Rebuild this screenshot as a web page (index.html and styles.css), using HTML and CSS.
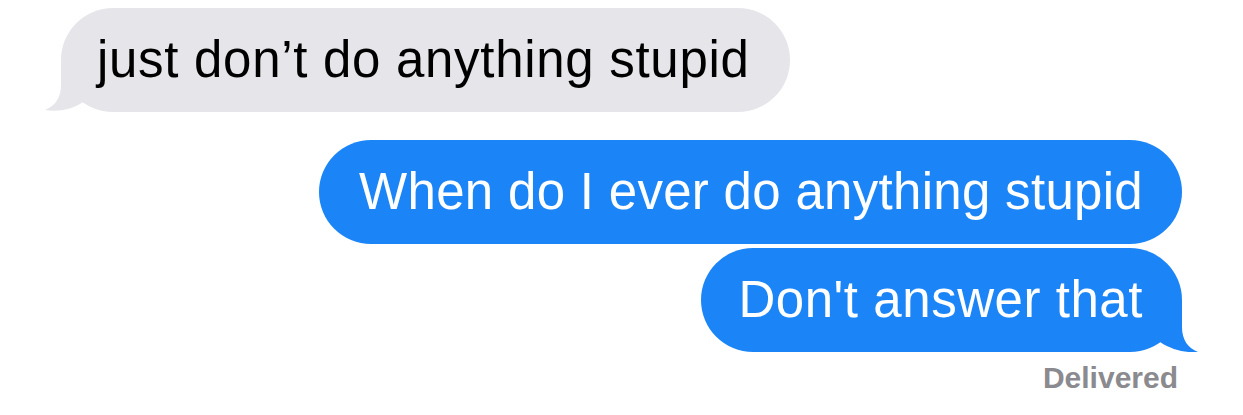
FILE: index.html
```html
<!DOCTYPE html>
<html lang="en">
<head>
<meta charset="utf-8">
<title>Messages</title>
<link rel="stylesheet" href="styles.css">
</head>
<body>
<div class="thread">
  <div class="bubble incoming">
    <span class="text">just don’t do anything stupid</span>
    <svg class="tail tail-left" width="60" height="62" viewBox="0 0 60 62"><path d="M18,10 V35 C18,48 12,56 2,60 C15,62 28,60 40,52 L60,40 L60,10 Z"/></svg>
  </div>
  <div class="bubble outgoing first">
    <span class="text">When do I ever do anything stupid</span>
  </div>
  <div class="bubble outgoing last">
    <span class="text">Don't answer that</span>
    <svg class="tail tail-right" width="60" height="62" viewBox="0 0 60 62"><path d="M42,10 V37 C42,50 48,58 58,62 C45,63 32,60 20,52 L0,40 L0,10 Z"/></svg>
  </div>
  <div class="status">Delivered</div>
</div>
</body>
</html>
```

FILE: styles.css
```css
html, body {
  margin: 0;
  padding: 0;
  background: #ffffff;
}

.thread {
  display: flex;
  flex-direction: column;
  padding: 8px 61px 0 61px;
  font-family: "Liberation Sans", Arial, Helvetica, sans-serif;
}

.bubble {
  position: relative;
  height: 104px;
  line-height: 104px;
  border-radius: 52px;
  font-size: 51px;
  letter-spacing: 0.3px;
  white-space: nowrap;
  box-sizing: border-box;
}

.incoming {
  align-self: flex-start;
  background: #e5e5ea;
  color: #000000;
  letter-spacing: 0.7px;
  padding: 0 40px 0 36px;
}

.incoming .tail path {
  fill: #e5e5ea;
}

.outgoing {
  align-self: flex-end;
  background: #1b85f7;
  color: #ffffff;
  padding: 0 39px 0 40px;
}

.outgoing .tail path {
  fill: #1b85f7;
}

.outgoing.first {
  margin-top: 28px;
}

.outgoing.last {
  margin-top: 4px;
  padding-left: 37px;
  letter-spacing: 0.55px;
}

.text {
  position: relative;
  z-index: 1;
}

.tail {
  position: absolute;
  bottom: 0;
  display: block;
}

.tail-left {
  left: -18px;
}

.tail-right {
  right: -18px;
}

.status {
  align-self: flex-end;
  margin-top: 8px;
  margin-right: 4px;
  font-size: 30px;
  line-height: 36px;
  font-weight: bold;
  color: #8a8a8f;
}
```
